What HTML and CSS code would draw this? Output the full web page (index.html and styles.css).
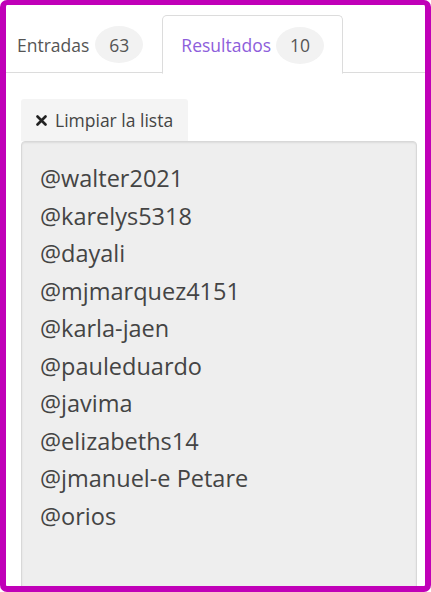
FILE: index.html
```html
<!DOCTYPE html>
<html>
	<head>
		<meta charset="utf-8">
		<title>Resultados</title>
		<link rel="stylesheet" href="styles.css">
	</head>
	<body>
		<div class="frame">
			<ul class="tabs">
				<li class="tab first">Entradas <span class="badge">63</span></li>
				<li class="tab on">Resultados <span class="badge">10</span></li>
			</ul>
			<div class="panel">
				<button class="clear">
					<svg class="x" width="11" height="11" viewBox="0 0 11 11"><path d="M1.5 1.5 L9.5 9.5 M9.5 1.5 L1.5 9.5" stroke="#222" stroke-width="2.6" stroke-linecap="round"/></svg>
					Limpiar la lista
				</button>
				<div class="list">
					<div>@walter2021</div>
					<div>@karelys5318</div>
					<div>@dayali</div>
					<div>@mjmarquez4151</div>
					<div>@karla-jaen</div>
					<div>@pauleduardo</div>
					<div>@javima</div>
					<div>@elizabeths14</div>
					<div>@jmanuel-e Petare</div>
					<div>@orios</div>
				</div>
			</div>
		</div>
	</body>
</html>
```

FILE: styles.css
```css
*{
    padding:0;
    margin:0;
    list-style: none;
    box-sizing: border-box;
}
body{
    font-family: "Open Sans", "Noto Sans", sans-serif;
    color:#444;
    background:#fff;
}
.frame{
    width:431px;
    height:592px;
    border:6px solid #c000b8;
    border-top-width:5px;
    border-radius:7px;
    overflow:hidden;
    background:#fff;
}
.tabs{
    display:flex;
    margin-top:10px;
    border-bottom:1px solid #dcdcdc;
    height:58px;
}
.tab{
    display:flex;
    align-items:center;
    gap:6px;
    font-size:17.5px;
    color:#555;
    padding:2px 19px 0 11px;
}
.tab.on{
    color:#8d5edb;
    border:1px solid #dcdcdc;
    border-bottom-color:#fff;
    border-radius:5px 5px 0 0;
    background:#fff;
    height:59px;
    padding:1px 18px 0;
    gap:5px;
}
.badge{
    display:inline-flex;
    align-items:center;
    justify-content:center;
    width:48px;
    height:37px;
    border-radius:50%;
    background:#f2f2f2;
    color:#555;
}
.panel{
    padding:26px 8px 0 15px;
}
.clear{
    display:flex;
    align-items:center;
    gap:8px;
    height:42px;
    padding:0 15px;
    border:none;
    background:#f4f4f4;
    font-family:inherit;
    font-size:17.5px;
    color:#444;
    border-radius:3px 3px 0 0;
}
.list{
    width:396px;
    height:460px;
    background:#eee;
    border:1px solid #d8d8d8;
    border-radius:4px;
    box-shadow: inset 0 1px 2px rgba(0,0,0,0.08);
    padding:18px 18px;
    font-size:23.5px;
    line-height:37.5px;
    color:#444;
}
```
